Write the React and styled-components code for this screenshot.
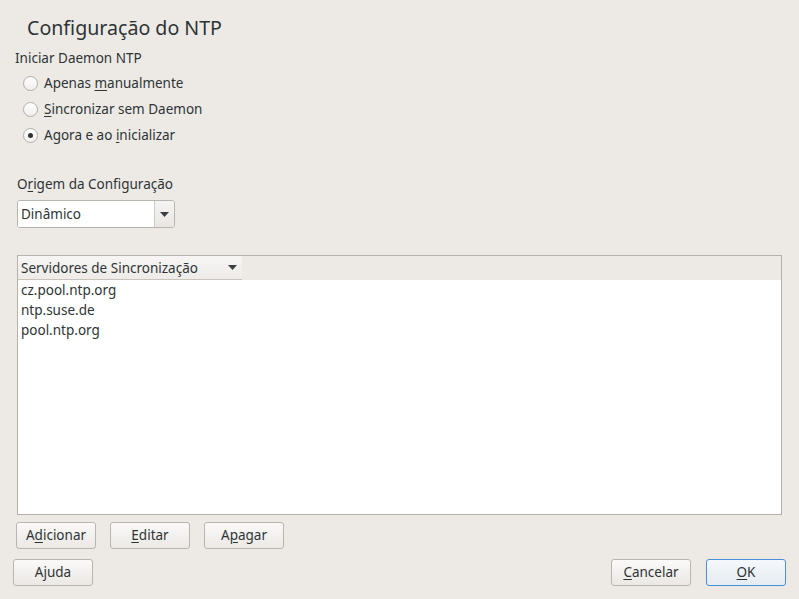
import React from "react";
import styled, { createGlobalStyle } from "styled-components";

const Global = createGlobalStyle`
  html, body { margin: 0; padding: 0; }
  body {
    background: #edeae6;
    font-family: "Noto Sans", "Open Sans", sans-serif;
    color: #2e3436;
  }
`;

const Page = styled.div`
  width: 799px;
  height: 599px;
  box-sizing: border-box;
  display: flex;
  flex-direction: column;
  background: #edeae6;
  overflow: hidden;
`;

const Title = styled.h1`
  margin: 14px 0 0 27px;
  font-size: 19.6px;
  font-weight: 400;
  line-height: 28px;
  color: #2e3436;
`;

const Label = styled.div`
  margin: ${(p) => p.$m || "0"};
  font-size: 13.5px;
  line-height: 20px;
  color: #2e3436;
`;

const RadioList = styled.div`
  display: flex;
  flex-direction: column;
  gap: 6px;
  margin: 5px 0 0 23px;
`;

const RadioRow = styled.label`
  display: flex;
  align-items: center;
  gap: 6px;
  font-size: 13.5px;
  line-height: 20px;
  height: 20px;
`;

const Circle = styled.span`
  width: 13px;
  height: 13px;
  border-radius: 50%;
  border: 1px solid #b3aea8;
  background: linear-gradient(#ffffff, #f1efed);
  display: flex;
  align-items: center;
  justify-content: center;
  flex: none;
  &::after {
    content: "";
    width: 5px;
    height: 5px;
    border-radius: 50%;
    background: ${(p) => (p.$on ? "#2e3436" : "transparent")};
  }
`;

const U = styled.span`
  text-decoration: underline;
  text-underline-offset: 2px;
`;

const Combo = styled.div`
  margin: 6px 0 0 17px;
  width: 158px;
  height: 28px;
  box-sizing: border-box;
  border: 1px solid #b9b4ae;
  border-radius: 3px;
  display: flex;
  background: #fff;
  overflow: hidden;
`;

const ComboText = styled.div`
  flex: 1;
  padding-left: 3px;
  font-size: 13.5px;
  line-height: 26px;
  background: #fff;
`;

const ComboBtn = styled.div`
  width: 19px;
  border-left: 1px solid #cfcac4;
  background: linear-gradient(#f6f5f4, #e9e6e2);
  display: flex;
  align-items: center;
  justify-content: center;
`;

const Table = styled.div`
  margin: 27px 17px 0 17px;
  height: 260px;
  box-sizing: border-box;
  border: 1px solid #b6b1ab;
  display: flex;
  flex-direction: column;
  background: #fff;
`;

const HeaderBar = styled.div`
  height: 24px;
  display: flex;
  background: #edeae6;
  flex: none;
`;

const HeaderCell = styled.div`
  width: 224px;
  box-sizing: border-box;
  border-bottom: 1px solid #c8c3bd;
  background: linear-gradient(#f7f6f5, #eeebe8);
  display: flex;
  align-items: center;
  justify-content: space-between;
  padding: 0 5px 0 3px;
  font-size: 13.5px;
`;

const Rows = styled.div`
  display: flex;
  flex-direction: column;
`;

const Row = styled.div`
  height: 20px;
  line-height: 20px;
  padding-left: 3px;
  font-size: 13.5px;
  color: #2e3436;
`;

const ButtonRow = styled.div`
  display: flex;
  gap: 14px;
  margin: ${(p) => p.$m || "0"};
  justify-content: ${(p) => (p.$between ? "space-between" : "flex-start")};
`;

const Group = styled.div`
  display: flex;
  gap: 15px;
`;

const Button = styled.button`
  width: 80px;
  height: 27px;
  box-sizing: border-box;
  border: 1px solid ${(p) => (p.$default ? "#4a90d9" : "#b9b4ae")};
  border-radius: 3px;
  background: ${(p) =>
    p.$default
      ? "linear-gradient(#f5f8fb, #e4ebf2)"
      : "linear-gradient(#fbfaf9, #ebe8e5)"};
  font-family: "Noto Sans", "Open Sans", sans-serif;
  font-size: 13.5px;
  color: #2e3436;
  padding: 0;
  line-height: 25px;
`;

const Arrow = () => (
  <svg width="9" height="5" viewBox="0 0 9 5">
    <path d="M0 0 L9 0 L4.5 5 Z" fill="#3a3f41" />
  </svg>
);

export default function App() {
  return (
    <Page>
      <Global />
      <Title>Configuração do NTP</Title>
      <Label $m="6px 0 0 15px">Iniciar Daemon NTP</Label>
      <RadioList>
        <RadioRow>
          <Circle />
          <span>
            Apenas <U>m</U>anualmente
          </span>
        </RadioRow>
        <RadioRow>
          <Circle />
          <span>
            <U>S</U>incronizar sem Daemon
          </span>
        </RadioRow>
        <RadioRow>
          <Circle $on />
          <span>
            Agora e ao <U>i</U>nicializar
          </span>
        </RadioRow>
      </RadioList>
      <Label $m="29px 0 0 17px">
        O<U>r</U>igem da Configuração
      </Label>
      <Combo>
        <ComboText>Dinâmico</ComboText>
        <ComboBtn>
          <Arrow />
        </ComboBtn>
      </Combo>
      <Table>
        <HeaderBar>
          <HeaderCell>
            <span>Servidores de Sincronização</span>
            <Arrow />
          </HeaderCell>
        </HeaderBar>
        <Rows>
          <Row>cz.pool.ntp.org</Row>
          <Row>ntp.suse.de</Row>
          <Row>pool.ntp.org</Row>
        </Rows>
      </Table>
      <ButtonRow $m="7px 0 0 16px">
        <Button>
          A<U>d</U>icionar
        </Button>
        <Button>
          <U>E</U>ditar
        </Button>
        <Button>
          A<U>p</U>agar
        </Button>
      </ButtonRow>
      <ButtonRow $between $m="10px 13px 0 13px">
        <Button>Ajuda</Button>
        <Group>
          <Button>
            <U>C</U>ancelar
          </Button>
          <Button $default>
            <U>O</U>K
          </Button>
        </Group>
      </ButtonRow>
    </Page>
  );
}
